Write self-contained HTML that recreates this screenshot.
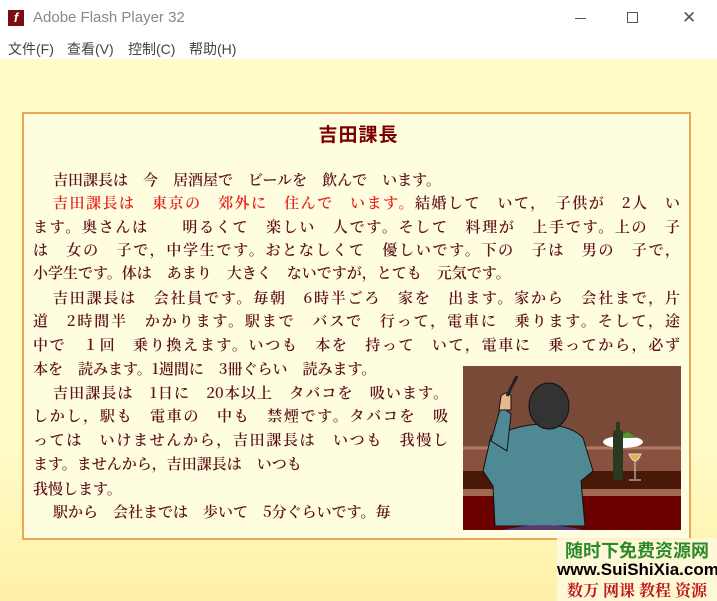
<!DOCTYPE html>
<html><head><meta charset="utf-8"><style>
*{margin:0;padding:0}
body{width:717px;height:601px;overflow:hidden;position:relative;background:#fff;font-family:"Liberation Sans","Noto Sans CJK JP",sans-serif}
.tb{position:absolute;left:0;top:0;width:717px;height:38px;background:#fff}
.tb .t{position:absolute;left:33px;top:9px;font-size:15px;color:#888}
.menu{position:absolute;left:0;top:38px;width:717px;height:20px;background:#fff;font-size:14px;color:#444}
.menu span{position:absolute;top:1px}
.c{position:absolute;left:0;top:59px;width:717px;height:542px;background:linear-gradient(#fffcc8 0%,#fffcc8 70%,#fff0a8 100%)}
.box{position:absolute;left:22px;top:112px;width:665px;height:424px;border:2px solid #eba659;background:#fffde0}
.l{position:absolute;font-family:"Noto Serif CJK JP","Noto Serif CJK SC",serif;font-weight:600;font-size:15px;line-height:20px;color:#5e1414;white-space:pre;width:647px;text-align:justify;text-align-last:justify}
.r{color:#e8201c}
.n{text-align-last:left}
</style></head><body>
<div class="tb">
<div style="position:absolute;left:8px;top:10px;width:16px;height:16px;background:#7a0d0d;color:#fff;font-size:13px;font-style:italic;font-weight:bold;text-align:center;line-height:16px">f</div>
<div class="t">Adobe Flash Player 32</div>
<div style="position:absolute;left:575px;top:18px;width:11px;height:1px;background:#555"></div>
<div style="position:absolute;left:627px;top:12px;width:9px;height:9px;border:1px solid #555"></div>
<div style="position:absolute;left:682px;top:8px;font-size:17px;color:#555">✕</div>
</div>
<div class="menu"><span style="left:8px">文件(F)</span><span style="left:67px">查看(V)</span><span style="left:128px">控制(C)</span><span style="left:189px">帮助(H)</span></div>
<div class="c"></div>
<div class="box"></div>
<div style="position:absolute;left:0;top:120px;width:717px;text-align:center;font-size:19px;font-weight:bold;color:#7a0000;font-family:'Noto Sans CJK JP',sans-serif;letter-spacing:1px">吉田課長</div>
<div class="l n" style="left:53px;top:170px;width:627px">吉田課長は　今　居酒屋で　ビールを　飲んで　います。</div>
<div class="l" style="left:53px;top:193px;width:627px"><span class="r">吉田課長は　東京の　郊外に　住んで　います。</span>結婚して　いて，　子供が　2人　い</div>
<div class="l" style="left:33px;top:217px">ます。奥さんは　　明るくて　楽しい　人です。そして　料理が　上手です。上の　子</div>
<div class="l" style="left:33px;top:240px">は　女の　子で，中学生です。おとなしくて　優しいです。下の　子は　男の　子で，</div>
<div class="l n" style="left:33px;top:263px">小学生です。体は　あまり　大きく　ないですが，とても　元気です。</div>
<div class="l" style="left:53px;top:288px;width:627px">吉田課長は　会社員です。毎朝　6時半ごろ　家を　出ます。家から　会社まで，片</div>
<div class="l" style="left:33px;top:311px">道　2時間半　かかります。駅まで　バスで　行って，電車に　乗ります。そして，途</div>
<div class="l" style="left:33px;top:335px">中で　１回　乗り換えます。いつも　本を　持って　いて，電車に　乗ってから，必ず</div>
<div class="l n" style="left:33px;top:359px">本を　読みます。1週間に　3冊ぐらい　読みます。</div>
<div class="l" style="left:53px;top:383px;width:395px">吉田課長は　1日に　20本以上　タバコを　吸います。</div>
<div class="l" style="left:33px;top:406px;width:415px">しかし，駅も　電車の　中も　禁煙です。タバコを　吸</div>
<div class="l" style="left:33px;top:430px;width:415px">っては　いけませんから，吉田課長は　いつも　我慢し</div>
<div class="l n" style="left:33px;top:454px">ます。ませんから，吉田課長は　いつも</div>
<div class="l n" style="left:33px;top:479px">我慢します。</div>
<div class="l n" style="left:53px;top:502px">駅から　会社までは　歩いて　5分ぐらいです。毎</div>
<svg style="position:absolute;left:463px;top:366px" width="218" height="164" viewBox="0 0 218 164">
<rect width="218" height="164" fill="#7a4a38"/>
<rect y="80" width="218" height="25" fill="#8a5040"/>
<rect y="105" width="218" height="18" fill="#4a1808"/>
<rect y="123" width="218" height="7" fill="#a06850"/>
<rect y="130" width="218" height="34" fill="#6a0000"/>
<path d="M0 82 H218" stroke="#b07a60" stroke-width="3"/>
<ellipse cx="160" cy="76" rx="20" ry="6" fill="#fff"/>
<path d="M150 72 l15-6 8 6z" fill="#4a9a30"/>
<rect x="150" y="64" width="10" height="50" rx="3" fill="#2a3a20"/>
<rect x="153" y="56" width="4" height="10" fill="#2a3a20"/>
<path d="M166 88 q6 14 12 0z M172 95 v18 M166 114 h12" stroke="#ddd" fill="#e0b040"/>
<path d="M32 160 L30 120 L20 105 L28 70 Q60 58 80 58 Q110 60 120 72 L130 105 L118 115 L122 160Z" fill="#4f8a94" stroke="#111"/>
<path d="M28 75 L38 40 L48 48 L44 85Z" fill="#4f8a94" stroke="#111"/>
<path d="M38 30 q6 -6 10 0 l0 14 h-12z" fill="#e8b890" stroke="#111"/>
<path d="M44 30 L54 10" stroke="#222" stroke-width="3"/>
<ellipse cx="86" cy="40" rx="20" ry="23" fill="#333" stroke="#111"/>
<path d="M40 164 q40 -10 80 0z" fill="#5a3a70"/>
</svg>
<div style="position:absolute;left:557px;top:538px;width:160px;height:63px;background:rgba(255,248,220,.9);text-align:center;font-weight:bold;line-height:20px">
<div style="color:#2a8a2a;font-size:18px;font-family:'Noto Sans CJK SC',sans-serif;margin-top:2px">随时下免费资源网</div>
<div style="color:#000;font-size:17px">www.SuiShiXia.com</div>
<div style="color:#c01818;font-size:16px;font-family:'Noto Serif CJK SC',serif">数万 网课 教程 资源</div>
</div>
</body></html>
